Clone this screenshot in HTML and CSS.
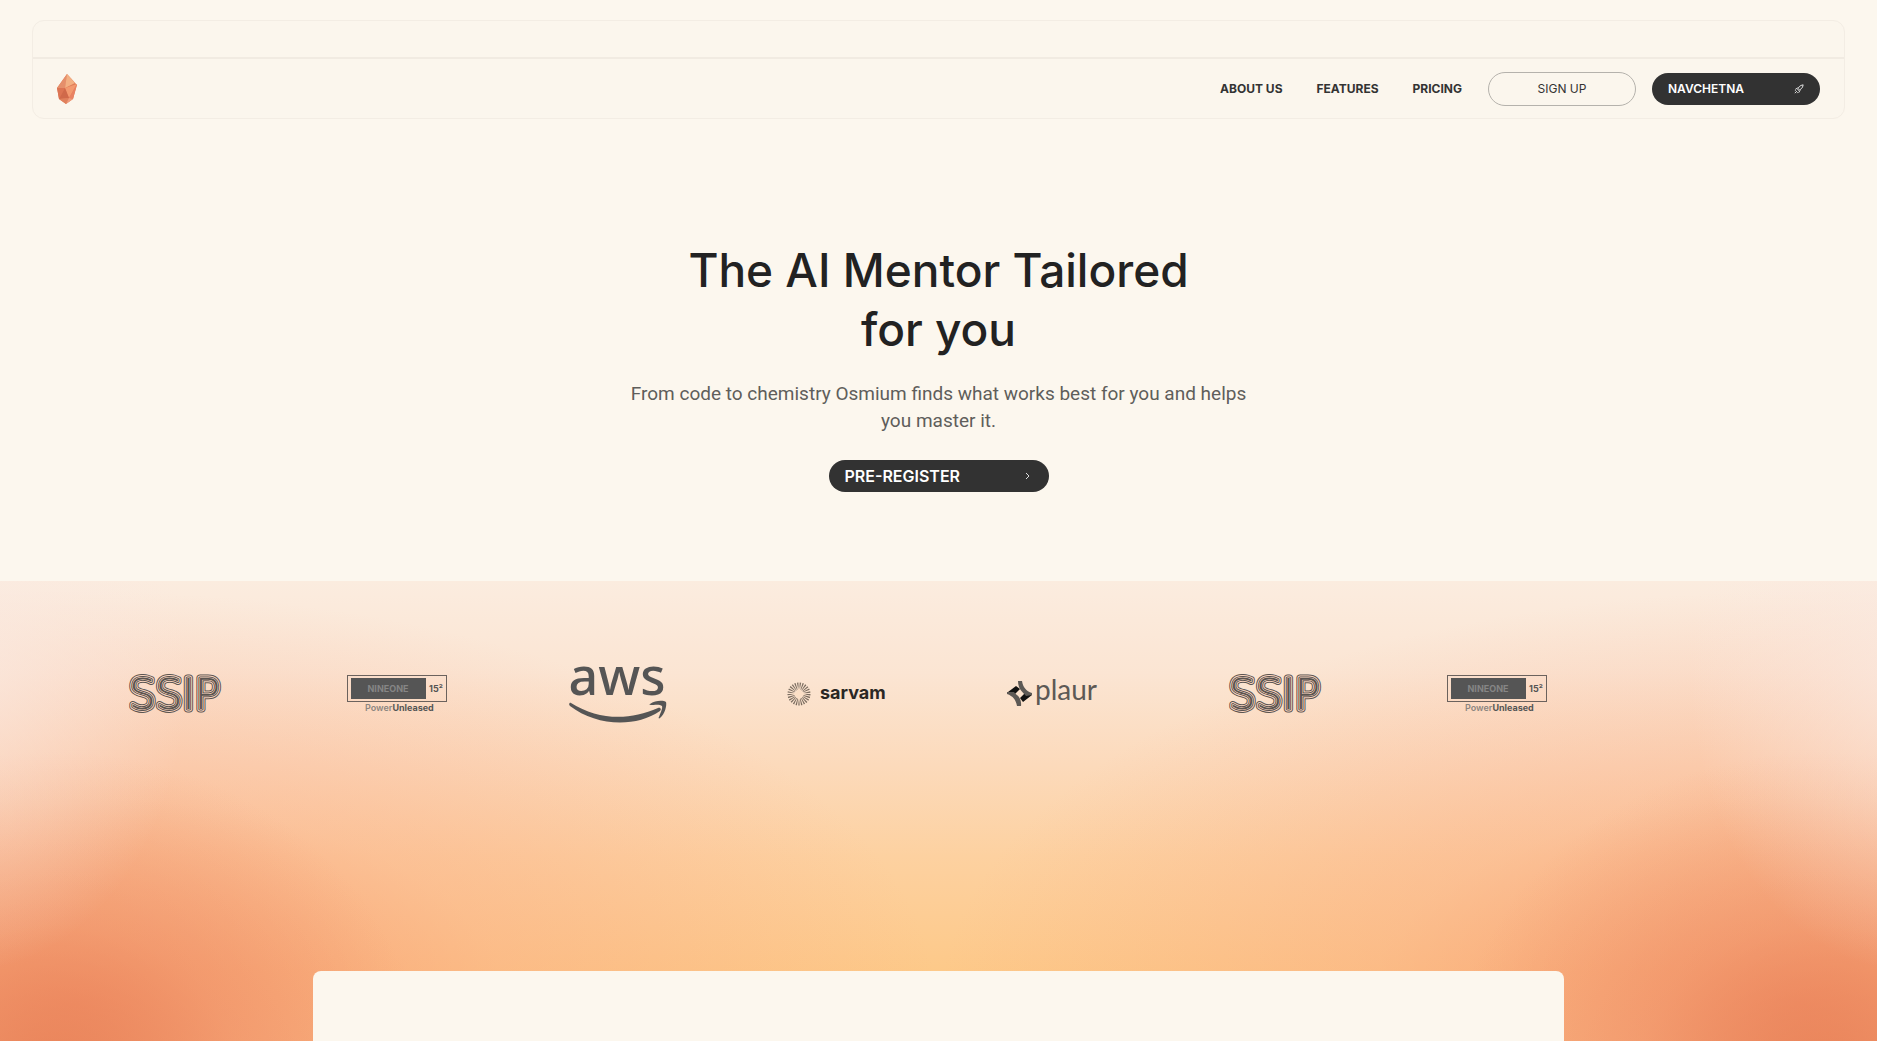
FILE: index.html
```
<!DOCTYPE html>
<html lang="en">
<head>
    <meta charset="UTF-8">
    <meta name="viewport" content="width=device-width, initial-scale=1.0">
    <title>Osmium</title>
    <link rel="stylesheet" href="styles.css">
</head>
<body>

    <header class="navbar">
        <div class="navbar-top"></div>
        <div class="navbar-main">
            <a class="brand" href="#" aria-label="Osmium">
                <svg width="20" height="30" viewBox="0 0 20 30">
                    <polygon points="10,0 20,11 16,25 9,30 2,25 0,14" fill="#e07d58"/>
                    <polygon points="10,0 0,14 8,14" fill="#e58f6b"/>
                    <polygon points="10,0 8,14 18,9" fill="#f3b083"/>
                    <polygon points="10,0 18,9 20,11" fill="#e79a78"/>
                    <polygon points="8,14 20,10 12,24" fill="#f3996f"/>
                    <polygon points="20,10 12,24 16,25" fill="#e98263"/>
                    <polygon points="0,14 8,14 2,25" fill="#dc7453"/>
                    <polygon points="8,14 12,24 2,25" fill="#d0694a"/>
                    <polygon points="2,25 12,24 9,30" fill="#e0805c"/>
                    <polygon points="12,24 16,25 9,30" fill="#ee9b7c"/>
                </svg>
            </a>
            <nav class="nav-links">
                <a class="nav-link" href="#about">ABOUT US</a>
                <a class="nav-link" href="#features">FEATURES</a>
                <a class="nav-link" href="#pricing">PRICING</a>
            </nav>
            <button class="btn-outline" type="button">SIGN UP</button>
            <button class="btn-dark btn-nav" type="button">
                NAVCHETNA
                <svg width="10" height="10" viewBox="0 0 24 24" fill="none" stroke="#fff" stroke-width="2">
                    <path d="M9 14C10 8 14 3 22 2c-1 8-6 12-12 13z"/>
                    <path d="M9 9L3 13M15 15l-4 6"/>
                    <path d="M2 22l5-5M2 17l2-2M7 22l2-2"/>
                </svg>
            </button>
        </div>
    </header>

    <section class="hero">
        <h1>The AI Mentor Tailored<br>for you</h1>
        <p>From code to chemistry Osmium finds what works best for you and helps you master it.</p>
        <button class="btn-dark btn-register" type="button">
            PRE-REGISTER
            <svg width="10" height="8" viewBox="0 0 10 8" fill="none" stroke="#ddd">
                <path d="M3 1l3 3-3 3"/>
            </svg>
        </button>
    </section>

    <section class="showcase">
        <div class="logos">
            <svg class="logo" viewBox="0 0 100 60">
                <g class="ssip-a"><text id="ssip" x="2" y="45">SSIP</text></g>
                <use href="#ssip" class="ssip-b"/>
                <use href="#ssip" class="ssip-c"/>
                <use href="#ssip" class="ssip-d"/>
                <use href="#ssip" class="ssip-e"/>
            </svg>

            <svg class="logo" viewBox="0 0 100 60">
                <g id="nineone">
                    <rect class="nine-frame" x="0.5" y="11.5" width="99" height="26"/>
                    <rect class="nine-fill" x="4" y="14" width="75" height="21"/>
                    <text class="nine-name" x="41" y="28">NINEONE</text>
                    <text class="nine-size" x="82" y="28">15²</text>
                    <text class="nine-tag" x="18" y="47">Power<tspan class="nine-strong">Unleased</tspan></text>
                </g>
            </svg>

            <svg class="logo" viewBox="0 0 100 60">
                <text class="aws-text" x="50" y="31">aws</text>
                <path class="aws-smile" d="M4 39c27 17 58 18 87 5 2-1 4 1 2 3-25 17-64 15-90-5-2-2 0-4 1-3z"/>
                <path class="aws-smile" d="M83 40c5-4 14-4 16-2 1 3-1 12-6 16-1 1-2 0-1-1 1-3 4-9 3-11-2-2-8-1-11-1-2 0-2-1-1-1z"/>
            </svg>

            <svg class="logo" viewBox="0 0 100 60">
                <circle class="sarvam-outer" cx="12" cy="30" r="8"/>
                <path class="sarvam-star" d="M12 22q1 7 8 8-7 1-8 8-1-7-8-8 7-1 8-8z"/>
                <text class="sarvam-text" x="33" y="35">sarvam</text>
            </svg>

            <svg class="logo" viewBox="0 0 100 60">
                <path class="plaur-black" d="M1 28l8-6 4 3-6 6zM25 31l-9 7-3-4 6-6z"/>
                <path class="plaur-grey" d="M11 17h4c1 6 4 10 10 12v2l-6 1c-2-3-8-6-8-15z"/>
                <path class="plaur-grey" d="M14 42h-4c-1-6-4-10-10-12v-2l7 0c2 3 8 5 7 14z"/>
                <text class="plaur-text" x="28" y="36">plaur</text>
            </svg>

            <svg class="logo" viewBox="0 0 100 60">
                <g class="ssip-a"><use href="#ssip"/></g>
                <use href="#ssip" class="ssip-b"/>
                <use href="#ssip" class="ssip-c"/>
                <use href="#ssip" class="ssip-d"/>
                <use href="#ssip" class="ssip-e"/>
            </svg>

            <svg class="logo" viewBox="0 0 100 60">
                <use href="#nineone"/>
            </svg>
        </div>

        <div class="card"></div>
    </section>

</body>
</html>
```
FILE: styles.css
```
* {
    box-sizing: border-box;
}

body {
    margin: 0;
    min-height: 100vh;
    display: flex;
    flex-direction: column;
    background-color: #fcf7ee;
    color: #222;
    font-family: Inter, "Liberation Sans", sans-serif;
}

button {
    font-family: inherit;
    cursor: pointer;
}

/* navbar */
.navbar {
    margin: 20px 32px 0;
    border: 1px solid #f3ede4;
    border-radius: 12px;
    background-color: #fbf6ed;
}

.navbar-top {
    height: 38px;
    border-bottom: 2px solid #f1ebe2;
}

.navbar-main {
    display: flex;
    align-items: center;
    height: 59px;
    padding: 0 24px;
}

.brand {
    display: flex;
}

.nav-links {
    display: flex;
    gap: 34px;
    margin-left: auto;
    margin-right: 26px;
}

.nav-link {
    color: #333;
    font-size: 12px;
    font-weight: 700;
    text-decoration: none;
}

.btn-outline {
    width: 148px;
    height: 34px;
    margin-right: 16px;
    border: 1px solid #b5b2ac;
    border-radius: 17px;
    background: none;
    color: #333;
    font-size: 12px;
}

.btn-dark {
    display: flex;
    align-items: center;
    justify-content: space-between;
    height: 32px;
    padding: 0 16px;
    border: none;
    border-radius: 16px;
    background-color: #323232;
    color: #fff;
    font-weight: 600;
}

.btn-nav {
    width: 168px;
    font-size: 12px;
}

/* hero */
.hero {
    display: flex;
    flex-direction: column;
    align-items: center;
    padding: 122px 24px 89px;
    text-align: center;
}

.hero h1 {
    margin: 0;
    font-size: 46px;
    font-weight: 500;
    line-height: 59px;
}

.hero p {
    width: 640px;
    max-width: 100%;
    margin: 21px 0 26px;
    color: #5f5e5b;
    font-family: Roboto, "Liberation Sans", sans-serif;
    font-size: 19px;
    line-height: 27px;
}

.btn-register {
    width: 220px;
    font-size: 16px;
    font-weight: 600;
}

/* gradient area */
.showcase {
    flex: 1;
    display: flex;
    flex-direction: column;
    align-items: center;
    background:
        radial-gradient(ellipse 12% 65% at -2% 20%, rgba(250, 234, 226, 0.7), rgba(250, 232, 224, 0.35) 50%, rgba(250, 232, 224, 0) 100%),
        radial-gradient(ellipse 12% 65% at 102% 20%, rgba(250, 234, 226, 0.7), rgba(250, 232, 224, 0.35) 50%, rgba(250, 232, 224, 0) 100%),
        radial-gradient(ellipse 20% 75% at 3% 112%, rgba(226, 116, 76, 0.75), rgba(232, 130, 90, 0.35) 50%, rgba(240, 150, 110, 0) 100%),
        radial-gradient(ellipse 20% 75% at 97% 112%, rgba(226, 116, 76, 0.75), rgba(232, 130, 90, 0.35) 50%, rgba(240, 150, 110, 0) 100%),
        radial-gradient(ellipse 46% 90% at 4% 92%, rgba(245, 142, 106, 0.75), rgba(248, 158, 126, 0.32) 50%, rgba(252, 190, 165, 0) 100%),
        radial-gradient(ellipse 46% 90% at 96% 92%, rgba(245, 142, 106, 0.75), rgba(248, 158, 126, 0.32) 50%, rgba(252, 190, 165, 0) 100%),
        linear-gradient(#fbecdf, #fbe5d3 20%, #fcdabb 40%, #fdd1a0 60%, #fdc989 85%);
}

.logos {
    display: flex;
    align-self: stretch;
    gap: 120px;
    padding: 83px 0 0 127px;
    overflow: hidden;
}

.logo {
    flex: none;
    width: 100px;
    height: 60px;
    overflow: visible;
}

.card {
    flex: 1;
    width: 66.7%;
    margin-top: 247px;
    border-radius: 8px 8px 0 0;
    background-color: #fcf7ee;
}

/* partner logos */
.ssip-a, .ssip-b, .ssip-c, .ssip-d, .ssip-e {
    fill: #fad6c0;
    stroke: #fad6c0;
    font-family: "DejaVu Sans Light", "DejaVu Sans", sans-serif;
    font-size: 42px;
    font-weight: 200;
    stroke-linejoin: round;
}

.ssip-a {
    stroke: #5a5450;
    stroke-width: 7;
}

.ssip-b {
    stroke-width: 5;
}

.ssip-c {
    stroke: #5a5450;
    stroke-width: 3;
}

.ssip-d {
    stroke-width: 1;
}

.ssip-e {
    fill: #5a5450;
    stroke: none;
}

.nine-frame {
    fill: none;
    stroke: #6b625d;
}

.nine-fill {
    fill: #555;
}

.nine-name {
    fill: #858585;
    font-size: 9px;
    font-weight: 700;
    text-anchor: middle;
}

.nine-size {
    fill: #555;
    font-size: 9px;
    font-weight: 700;
}

.nine-tag {
    fill: #8d8680;
    font-size: 9px;
    font-weight: 600;
}

.nine-strong {
    fill: #555;
    font-weight: 700;
}

.aws-text {
    fill: #555;
    font-family: "Noto Sans", sans-serif;
    font-size: 52px;
    font-weight: 500;
    text-anchor: middle;
}

.aws-smile {
    fill: #555;
}

.sarvam-outer {
    fill: none;
    stroke: #7b6d60;
    stroke-width: 7;
    stroke-dasharray: 1 1;
}

.sarvam-star {
    fill: #fbdfc6;
}

.sarvam-text {
    fill: #2b2724;
    font-size: 18px;
    font-weight: 700;
}

.plaur-black {
    fill: #111;
}

.plaur-grey {
    fill: #5d5955;
}

.plaur-text {
    fill: #5d5955;
    font-family: Lato, sans-serif;
    font-size: 28px;
}
```
